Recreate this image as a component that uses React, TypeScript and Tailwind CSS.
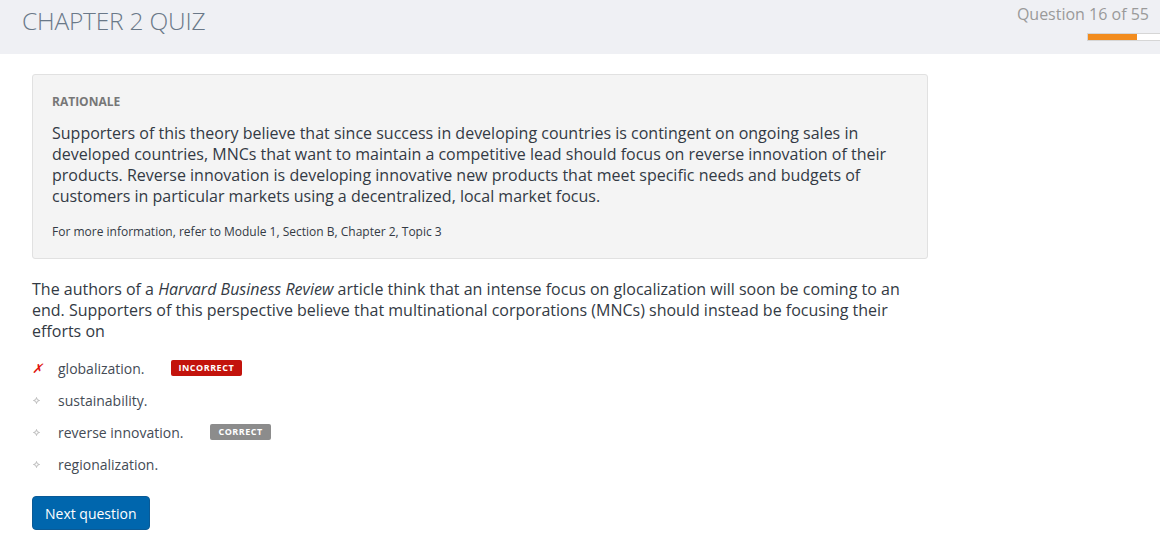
const OPTIONS = [
  { text: "globalization.", status: "incorrect" },
  { text: "sustainability.", status: "" },
  { text: "reverse innovation.", status: "correct" },
  { text: "regionalization.", status: "" },
];

function Marker({ wrong }: { wrong: boolean }) {
  if (wrong) {
    return <span className="w-[26px] text-[13px] italic leading-none text-[#e0140c]">✗</span>;
  }
  return (
    <span className="flex w-[26px] items-center pl-[1px]">
      <svg width="7" height="7" viewBox="0 0 7 7">
        <path d="M3.5 0.5 L4.3 2.7 L6.5 3.5 L4.3 4.3 L3.5 6.5 L2.7 4.3 L0.5 3.5 L2.7 2.7 Z" fill="none" stroke="#b5b5b5" strokeWidth="0.9" />
      </svg>
    </span>
  );
}

export default function App() {
  return (
    <div className="min-h-[548px] bg-white font-['Open_Sans',sans-serif]">
      {/* Header */}
      <div className="flex h-[54px] items-start justify-between bg-[#eff0f4]">
        <h1 className="pl-[22px] pt-[5px] text-[24.5px] font-light leading-[32px] tracking-[-0.2px] text-[#6a7888]">
          CHAPTER 2 QUIZ
        </h1>
        <div className="flex flex-col items-end pt-[4px]">
          <p className="pr-[11px] text-[16px] leading-[20px] text-[#9a9a9a]">Question 16 of 55</p>
          <div className="mt-[9px] flex h-[8px] w-[73px] border border-r-0 border-[#d6d6d6] bg-white">
            <div className="h-full w-[49px] bg-[#f28c1e]" />
          </div>
        </div>
      </div>

      <div className="w-[928px] pl-[32px]">
        {/* Rationale */}
        <div className="mt-[20px] rounded-[3px] border border-[#e1e1e1] bg-[#f4f4f4] px-[19px] pb-[18px] pt-[19px]">
          <p className="text-[12px] font-bold leading-[16px] text-[#777]">RATIONALE</p>
          <p className="mt-[13px] text-[16px] leading-[21px] text-[#333a44]">
            Supporters of this theory believe that since success in developing countries is contingent on ongoing sales in
            developed countries, MNCs that want to maintain a competitive lead should focus on reverse innovation of their
            products. Reverse innovation is developing innovative new products that meet specific needs and budgets of
            customers in particular markets using a decentralized, local market focus.
          </p>
          <p className="mt-[17px] text-[12px] leading-[16px] text-[#333a44]">
            For more information, refer to Module 1, Section B, Chapter 2, Topic 3
          </p>
        </div>

        {/* Question */}
        <p className="mt-[20px] text-[16px] leading-[21px] text-[#333a44]">
          The authors of a <i>Harvard Business Review</i> article think that an intense focus on glocalization will soon be
          coming to an end. Supporters of this perspective believe that multinational corporations (MNCs) should instead be
          focusing their efforts on
        </p>

        <ul className="mt-[10px]">
          {OPTIONS.map((o) => (
            <li key={o.text} className="flex h-[32px] items-center text-[14px] text-[#444b55]">
              <Marker wrong={o.status === "incorrect"} />
              <span>{o.text}</span>
              {o.status === "incorrect" && (
                <span className="ml-[26px] rounded-[2px] bg-[#c3130c] px-[8px] text-[9px] font-bold leading-[16px] tracking-[0.5px] text-white">
                  INCORRECT
                </span>
              )}
              {o.status === "correct" && (
                <span className="ml-[27px] rounded-[2px] bg-[#8c8c8c] px-[8px] text-[9px] font-bold leading-[16px] tracking-[0.5px] text-white">
                  CORRECT
                </span>
              )}
            </li>
          ))}
        </ul>

        <button className="mt-[16px] h-[34px] rounded-[4px] border border-[#0a5a96] bg-[#0066ad] px-[12px] text-[14px] font-medium text-white">
          Next question
        </button>
      </div>
    </div>
  );
}
